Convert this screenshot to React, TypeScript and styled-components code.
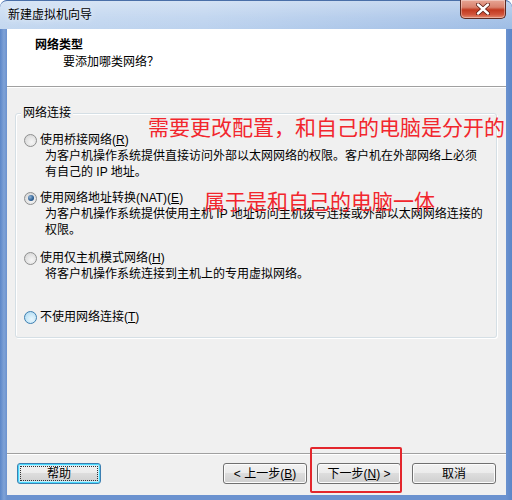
import React from "react";
import styled, { createGlobalStyle, css } from "styled-components";

const GlobalStyle = createGlobalStyle`
  html, body {
    margin: 0;
    padding: 0;
    background: #ffffff;
  }
  body {
    font-family: "Liberation Sans", "Noto Sans CJK SC", sans-serif;
    font-size: 12px;
    color: #000;
  }
`;

const FONT = `"Liberation Sans", "Noto Sans CJK SC", sans-serif`;

type Opt = {
  label: React.ReactNode;
  lines: string[];
  checked?: boolean;
  hover?: boolean;
  gap: number;
};

const options: Opt[] = [
  {
    label: (
      <>
        使用桥接网络(<u>R</u>)
      </>
    ),
    lines: [
      "为客户机操作系统提供直接访问外部以太网网络的权限。客户机在外部网络上必须",
      "有自己的 IP 地址。",
    ],
    gap: 0,
  },
  {
    label: (
      <>
        使用网络地址转换(NAT)(<u>E</u>)
      </>
    ),
    lines: [
      "为客户机操作系统提供使用主机 IP 地址访问主机拨号连接或外部以太网网络连接的",
      "权限。",
    ],
    checked: true,
    gap: 10,
  },
  {
    label: (
      <>
        使用仅主机模式网络(<u>H</u>)
      </>
    ),
    lines: ["将客户机操作系统连接到主机上的专用虚拟网络。"],
    gap: 12,
  },
  {
    label: (
      <>
        不使用网络连接(<u>T</u>)
      </>
    ),
    lines: [],
    hover: true,
    gap: 27,
  },
];

export default function App() {
  return (
    <>
      <GlobalStyle />
      <Window>
        <TitleBar>
          <Title>新建虚拟机向导</Title>
          <CloseButton>
            <svg width="14" height="12" viewBox="0 0 14 12">
              <path
                d="M2 1.5 L12 10.5 M12 1.5 L2 10.5"
                stroke="#5a1b12"
                strokeWidth="4"
                strokeLinecap="round"
              />
              <path
                d="M2 1.5 L12 10.5 M12 1.5 L2 10.5"
                stroke="#ffffff"
                strokeWidth="2.4"
                strokeLinecap="round"
              />
            </svg>
          </CloseButton>
        </TitleBar>

        <Client>
          <Header>
            <Heading>网络类型</Heading>
            <SubHeading>要添加哪类网络？</SubHeading>
          </Header>

          <Body>
            <GroupBox>
              <Legend>网络连接</Legend>
              {options.map((o, i) => (
                <Option key={i} $gap={o.gap}>
                  <OptionRow>
                    <Radio $checked={o.checked} $hover={o.hover} />
                    <span>{o.label}</span>
                  </OptionRow>
                  {o.lines.map((l, j) => (
                    <Desc key={j}>{l}</Desc>
                  ))}
                </Option>
              ))}
            </GroupBox>

            <Note $left={141} $top={26}>
              需要更改配置，和自己的电脑是分开的
            </Note>
            <Note $left={197} $top={100}>
              属于是和自己的电脑一体
            </Note>
          </Body>

          <Footer>
            <Button $focused>帮助</Button>
            <Spacer />
            <Button>
              &lt; 上一步(<u>B</u>)
            </Button>
            <Button $ml={10}>
              下一步(<u>N</u>) &gt;
            </Button>
            <Button $ml={11}>取消</Button>
          </Footer>
        </Client>

        <Highlight />
      </Window>
    </>
  );
}

const Window = styled.div`
  position: relative;
  width: 512px;
  height: 500px;
  box-sizing: border-box;
  padding: 0 6px 5px 7px;
  border-radius: 7px 7px 0 0;
  background: linear-gradient(
    to right,
    #5b86c8 0px,
    #7fa2d6 4px,
    #6b92cf 7px,
    #6b92cf calc(100% - 6px),
    #5b86c8 100%
  );
  display: flex;
  flex-direction: column;
  overflow: hidden;
`;

const TitleBar = styled.div`
  height: 29px;
  margin: 0 -6px 0 -7px;
  padding: 0 6px 0 8px;
  display: flex;
  align-items: flex-start;
  justify-content: space-between;
  background: linear-gradient(
      to bottom,
      rgba(255, 255, 255, 0.35) 0%,
      rgba(255, 255, 255, 0.1) 60%,
      rgba(255, 255, 255, 0) 100%
    ),
    linear-gradient(to right, #c4d8f0 0%, #bcd2ee 40%, #a9c4e8 80%, #9ebde5 100%);
  border-radius: 7px 7px 0 0;
  border-top: 1px solid #4a6fa8;
  box-sizing: border-box;
`;

const Title = styled.div`
  font-family: ${FONT};
  font-size: 12px;
  line-height: 16px;
  margin-top: 6px;
  color: #000;
  text-shadow: 0 0 6px rgba(255, 255, 255, 0.9);
`;

const CloseButton = styled.div`
  width: 46px;
  height: 19px;
  margin-top: -1px;
  box-sizing: border-box;
  border: 1px solid #5d2a22;
  border-top: none;
  border-radius: 0 0 5px 5px;
  background: linear-gradient(
    to bottom,
    #e7a594 0%,
    #d9826e 40%,
    #c2391f 55%,
    #d0533a 80%,
    #e48a6e 100%
  );
  box-shadow: inset 0 0 0 1px rgba(255, 255, 255, 0.35);
  display: flex;
  align-items: center;
  justify-content: center;
`;

const Client = styled.div`
  flex: 1;
  display: flex;
  flex-direction: column;
  background: #f0f0f0;
`;

const Header = styled.div`
  height: 57px;
  background: #ffffff;
  border-bottom: 1px solid #a0a0a0;
  padding: 8px 0 0 28px;
  box-sizing: border-box;
  height: 58px;
`;

const Heading = styled.div`
  font-family: ${FONT};
  font-weight: bold;
  font-size: 12px;
  line-height: 16px;
`;

const SubHeading = styled.div`
  font-family: ${FONT};
  font-size: 12px;
  line-height: 16px;
  margin: 1px 0 0 28px;
`;

const Body = styled.div`
  position: relative;
  flex: 1;
  padding: 0 9px 0 8px;
  border-top: 1px solid #ffffff;
`;

const GroupBox = styled.div`
  position: relative;
  margin-top: 25px;
  height: 225px;
  box-sizing: border-box;
  border: 1px solid #d5dfe5;
  border-radius: 3px;
  box-shadow: inset 1px 1px 0 #ffffff, 1px 1px 0 #ffffff;
  padding: 18px 0 0 8px;
`;

const Legend = styled.span`
  position: absolute;
  top: -9px;
  left: 5px;
  padding: 0 2px;
  background: #f0f0f0;
  font-family: ${FONT};
  font-size: 12px;
  line-height: 16px;
`;

const Option = styled.div<{ $gap: number }>`
  margin-top: ${(p) => p.$gap}px;
`;

const OptionRow = styled.div`
  display: flex;
  align-items: center;
  gap: 3px;
  height: 16px;
  font-family: ${FONT};
  font-size: 12px;
  line-height: 16px;

  u {
    text-underline-offset: 1px;
  }
`;

const Radio = styled.span<{ $checked?: boolean; $hover?: boolean }>`
  position: relative;
  width: 13px;
  height: 13px;
  flex: none;
  box-sizing: border-box;
  border-radius: 50%;
  border: 1px solid #8e8f8f;
  background: radial-gradient(circle at 60% 65%, #f6f6f6 0%, #e2e2e2 55%, #cfcfcf 100%);

  ${(p) =>
    p.$hover &&
    css`
      border-color: #3c7fb1;
      background: radial-gradient(circle at 60% 65%, #e8f6fd 0%, #c5e6f7 55%, #a6d3ee 100%);
    `}

  ${(p) =>
    p.$checked &&
    css`
      &::after {
        content: "";
        position: absolute;
        left: 2.5px;
        top: 2.5px;
        width: 6px;
        height: 6px;
        border-radius: 50%;
        background: radial-gradient(circle at 35% 35%, #8fb3d6 0%, #2c5f93 60%, #1b3f68 100%);
      }
    `}
`;

const Desc = styled.div`
  padding-left: 21px;
  font-family: ${FONT};
  font-size: 12px;
  line-height: 16px;
  white-space: nowrap;
`;

const Note = styled.div<{ $left: number; $top: number }>`
  position: absolute;
  left: ${(p) => p.$left}px;
  top: ${(p) => p.$top}px;
  font-family: "Noto Sans CJK SC", sans-serif;
  font-size: 21px;
  line-height: 24px;
  color: #f2262d;
  white-space: nowrap;
  letter-spacing: 0;
`;

const Footer = styled.div`
  height: 42px;
  box-sizing: border-box;
  border-top: 1px solid #a0a0a0;
  box-shadow: inset 0 1px 0 #ffffff;
  padding: 9px 10px 0 10px;
  display: flex;
  align-items: flex-start;
`;

const Spacer = styled.div`
  flex: 1;
`;

const Button = styled.div<{ $focused?: boolean; $ml?: number }>`
  width: 84px;
  height: 21px;
  margin-left: ${(p) => p.$ml ?? 0}px;
  box-sizing: border-box;
  border: 1px solid #707070;
  border-radius: 3px;
  background: linear-gradient(to bottom, #f2f2f2 0%, #ebebeb 50%, #dddddd 50%, #cfcfcf 100%);
  box-shadow: inset 0 0 0 1px #fcfcfc;
  display: flex;
  align-items: center;
  justify-content: center;
  font-family: ${FONT};
  font-size: 12px;
  line-height: 16px;
  color: #000;

  ${(p) =>
    p.$focused &&
    css`
      border-color: #3c7fb1;
      box-shadow: inset 0 0 0 1px #48d8fb, inset 0 0 0 2px #c5ecfb;
      outline: 1px dotted #333;
      outline-offset: -4px;
    `}
`;

const Highlight = styled.div`
  position: absolute;
  left: 310px;
  top: 447px;
  width: 92px;
  height: 46px;
  box-sizing: border-box;
  border: 2px solid #e3262c;
  border-radius: 2px;
  pointer-events: none;
`;
